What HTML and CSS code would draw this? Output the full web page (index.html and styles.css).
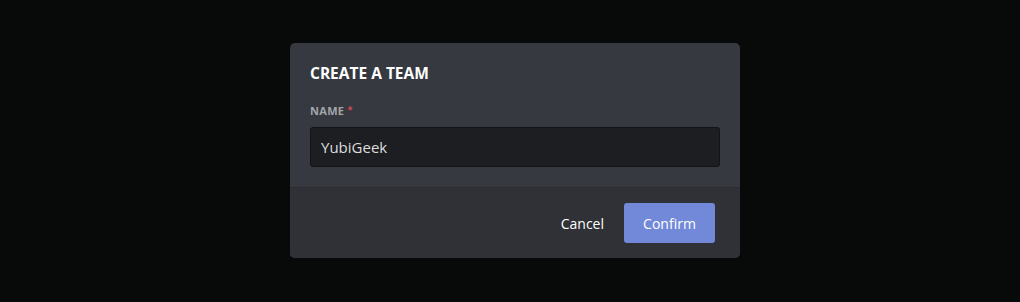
FILE: index.html
```html
<!DOCTYPE html>
<html>
<head>
<meta charset="utf-8">
<link rel="stylesheet" href="styles.css">
</head>
<body>
<div class="overlay">
  <div class="modal">
    <div class="modal-body">
      <h2 class="title">Create a Team</h2>
      <label class="label">Name <span class="req">*</span></label>
      <div class="input">YubiGeek</div>
    </div>
    <div class="modal-footer">
      <button class="btn-cancel">Cancel</button>
      <button class="btn-confirm">Confirm</button>
    </div>
  </div>
</div>
</body>
</html>
```
FILE: styles.css
```css
html, body {
  margin: 0;
  padding: 0;
  background: #080a0a;
  font-family: "Open Sans", "Noto Sans", sans-serif;
}
.overlay {
  width: 1020px;
  height: 302px;
  display: flex;
  align-items: flex-start;
  justify-content: center;
  padding: 43px 0 0 10px;
  box-sizing: border-box;
}
.modal {
  width: 450px;
  background: #36393f;
  border-radius: 5px;
  overflow: hidden;
}
.modal-body {
  padding: 20px;
}
.title {
  margin: 0 0 20px 0;
  font-size: 15.5px;
  line-height: 20px;
  font-weight: 700;
  text-transform: uppercase;
  color: #ffffff;
}
.label {
  display: block;
  height: 16px;
  margin-bottom: 8px;
  font-size: 11px;
  line-height: 16px;
  font-weight: 700;
  text-transform: uppercase;
  letter-spacing: 0.3px;
  color: #a3a6aa;
}
.req {
  color: #d84a4e;
  font-size: 9px;
  line-height: 0;
  vertical-align: 2px;
}
.input {
  height: 40px;
  box-sizing: border-box;
  padding: 0 10px;
  display: flex;
  align-items: center;
  background: #1d1e21;
  border: 1px solid #121315;
  border-radius: 3px;
  color: #dcddde;
  font-size: 15px;
}
.modal-footer {
  display: flex;
  justify-content: flex-end;
  align-items: center;
  background: #2f3136;
  border-top: 1px solid #2a2c30;
  padding: 15px 25px 15px 20px;
}
.btn-cancel {
  background: none;
  border: none;
  color: #ffffff;
  font-family: inherit;
  font-size: 14px;
  padding: 0;
  margin-right: 20px;
  height: 40px;
}
.btn-confirm {
  width: 91px;
  height: 40px;
  background: #7289da;
  color: #ffffff;
  border: none;
  border-radius: 3px;
  font-family: inherit;
  font-size: 14px;
}
```
